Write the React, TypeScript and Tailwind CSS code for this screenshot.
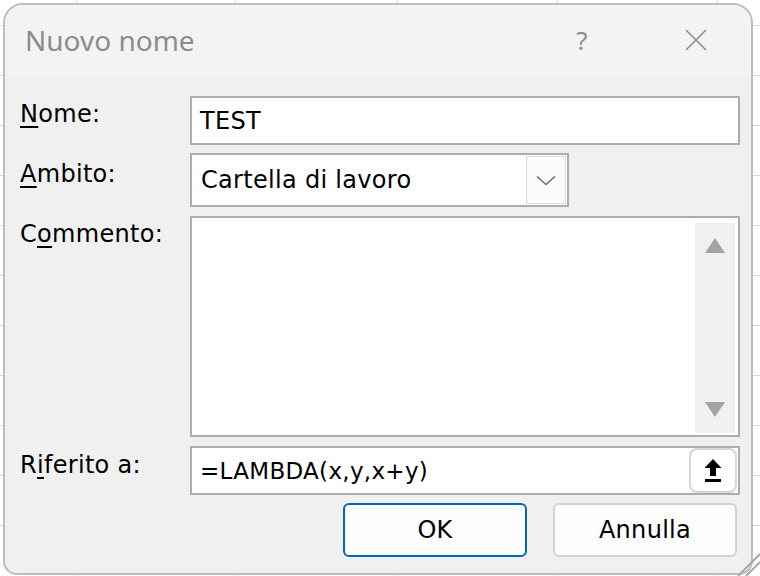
import React from "react";

const gridY = [25, 75, 125, 175, 225, 275, 325, 375, 425, 475, 525];
const gridX = [76, 235, 397, 557, 717];

function Label({ pre, u, post, pt }: { pre: string; u: string; post: string; pt: string }) {
  return (
    <div className={`w-[170px] shrink-0 ${pt} text-[24px] leading-[28px] tracking-[0.3px] text-black`}>
      {pre}
      <span className="underline decoration-[2px] underline-offset-[4px]">{u}</span>
      {post}
    </div>
  );
}

export default function App() {
  return (
    <div className="relative w-[760px] h-[576px] bg-white overflow-hidden pl-[3px] pt-[3px] font-['DejaVu_Sans',sans-serif]">
      {gridY.map((y) => (
        <div key={y} className="absolute left-0 w-[760px] h-[1px] bg-[#d6d6d6]" style={{ top: y }} />
      ))}
      {gridX.map((x) => (
        <div key={x} className="absolute top-0 h-[576px] w-[1px] bg-[#d6d6d6]" style={{ left: x }} />
      ))}

      <div className="relative z-10 flex flex-col w-[750px] h-[572px] border-2 border-[#bdbdbd] rounded-t-[20px] rounded-b-[14px] overflow-hidden bg-[#f0f0f0]">
        {/* Title bar */}
        <div className="h-[73px] shrink-0 bg-[#f3f3f3] flex items-center pl-[20px] pb-[3px]">
          <div className="flex-1 font-['Noto_Sans',sans-serif] text-[28px] leading-[32px] text-[#8c8c8c]">
            Nuovo nome
          </div>
          <div className="w-[40px] flex justify-center font-['Noto_Sans',sans-serif] text-[26px] leading-[32px] text-[#8c8c8c]">
            ?
          </div>
          <div className="w-[74px]" />
          <div className="w-[40px] flex justify-center">
            <svg width="22" height="22" viewBox="0 0 22 22">
              <path d="M1 1 L21 21 M21 1 L1 21" stroke="#8c8c8c" strokeWidth="1.6" fill="none" />
            </svg>
          </div>
          <div className="w-[35px]" />
        </div>

        {/* Body */}
        <div className="flex-1 flex flex-col pl-[15px] pr-[11px] pt-[18px]">
          {/* Nome */}
          <div className="flex h-[49px]">
            <Label pre="" u="N" post="ome:" pt="pt-[4px]" />
            <div className="flex-1 border-2 border-[#adadad] bg-white flex items-center pl-[8px] text-[24px] leading-[28px] tracking-[0.3px] text-black">
              TEST
            </div>
          </div>

          {/* Ambito */}
          <div className="flex h-[54px] mt-[8px]">
            <Label pre="" u="A" post="mbito:" pt="pt-[7px]" />
            <div className="w-[379px] border-2 border-[#adadad] bg-white flex">
              <div className="flex-1 flex items-center pl-[9px] text-[24px] leading-[28px] tracking-[0.3px] text-black">
                Cartella di lavoro
              </div>
              <div className="w-[40px] mr-[1px] my-[1px] border border-[#dadada] bg-[#fbfbfb] flex items-center justify-center">
                <svg width="20" height="11" viewBox="0 0 20 11">
                  <path d="M1 1.5 L10 9.5 L19 1.5" stroke="#707070" strokeWidth="1.6" fill="none" />
                </svg>
              </div>
            </div>
          </div>

          {/* Commento */}
          <div className="flex h-[221px] mt-[9px]">
            <Label pre="C" u="o" post="mmento:" pt="pt-[4px]" />
            <div className="flex-1 border-2 border-[#adadad] bg-white flex justify-end">
              <div className="w-[40px] mt-[5px] mb-[2px] mr-[3px] bg-[#f0f0f0] flex flex-col justify-between items-center pt-[15px] pb-[16px]">
                <svg width="20" height="15" viewBox="0 0 20 15">
                  <path d="M10 0 L20 15 L0 15 Z" fill="#a3a3a3" />
                </svg>
                <svg width="20" height="15" viewBox="0 0 20 15">
                  <path d="M0 0 L20 0 L10 15 Z" fill="#a3a3a3" />
                </svg>
              </div>
            </div>
          </div>

          {/* Riferito a */}
          <div className="flex h-[49px] mt-[9px]">
            <Label pre="R" u="i" post="ferito a:" pt="pt-[5px]" />
            <div className="flex-1 border-2 border-[#adadad] bg-white flex items-center pl-[8px]">
              <div className="flex-1 text-[23px] leading-[28px] tracking-[0.3px] text-black">
                =LAMBDA(x,y,x+y)
              </div>
              <div className="w-[48px] h-[45px] mr-[1px] border-2 border-[#d6d6d6] rounded-[8px] bg-white flex items-center justify-center">
                <svg width="18" height="26" viewBox="0 0 18 26">
                  <path d="M9 1 L17.5 10 L12 10 L12 18 L6 18 L6 10 L0.5 10 Z" fill="#000" />
                  <rect x="1" y="21" width="16" height="3" fill="#000" />
                </svg>
              </div>
            </div>
          </div>

          {/* Buttons */}
          <div className="flex justify-end gap-[26px] pr-[3px] mt-[8px]">
            <div className="w-[184px] h-[54px] border-2 border-[#0067c0] rounded-[6px] bg-[#fdfdfd] flex items-center justify-center text-[24px] leading-[28px] tracking-[0.3px] text-black">
              OK
            </div>
            <div className="w-[184px] h-[54px] border-2 border-[#cfd3d8] rounded-[6px] bg-[#fdfdfd] flex items-center justify-center text-[24px] leading-[28px] tracking-[0.3px] text-black">
              Annulla
            </div>
          </div>
        </div>
      </div>

      {/* resize grip */}
      <svg className="absolute right-0 bottom-0 z-20" width="26" height="26" viewBox="0 0 26 26">
        <path d="M4 26 L26 4 M12 26 L26 12" stroke="#a8a8a8" strokeWidth="2" fill="none" />
      </svg>
    </div>
  );
}
